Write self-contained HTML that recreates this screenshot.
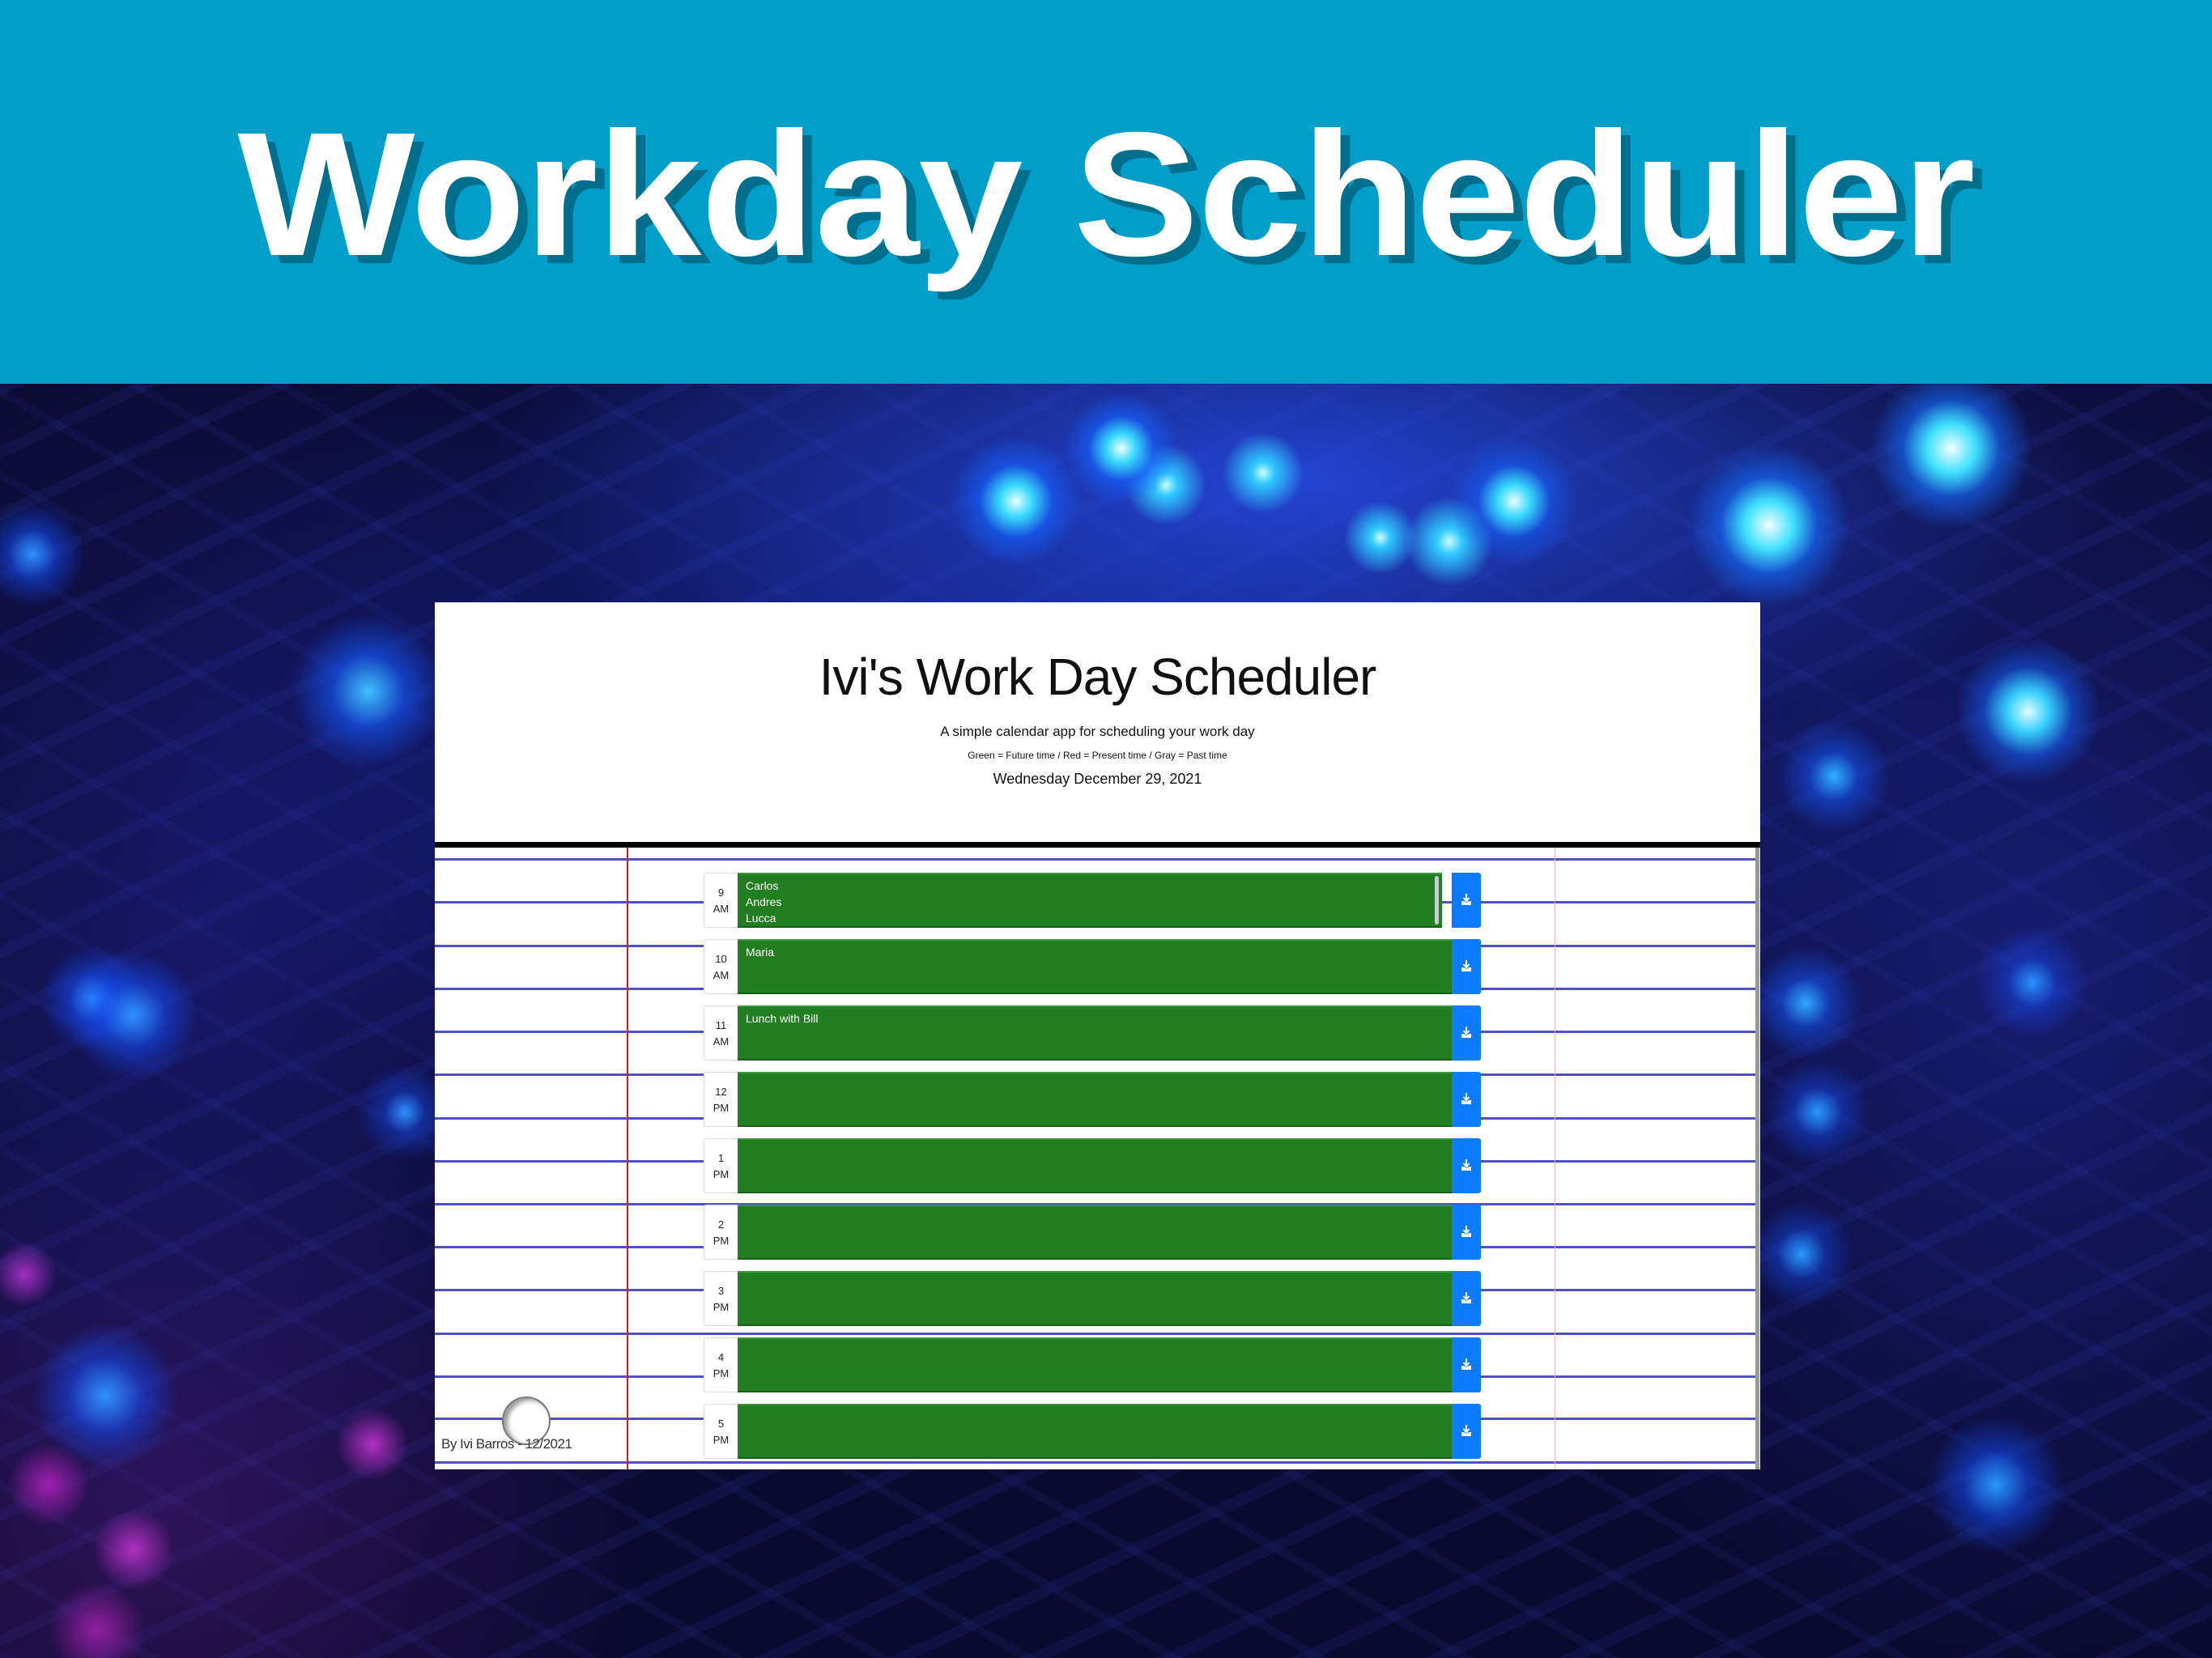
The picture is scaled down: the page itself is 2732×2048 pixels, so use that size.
<!DOCTYPE html>
<html><head><meta charset="utf-8"><style>
*{margin:0;padding:0;box-sizing:border-box}
body{width:2732px;height:2048px;overflow:hidden;position:relative;font-family:"Liberation Sans",sans-serif;background:#080828}
#banner{position:absolute;left:0;top:0;width:2732px;height:474px;background:#009ec8}
#banner h1{position:absolute;left:0;top:4px;width:2732px;text-align:center;font-size:218px;font-weight:bold;color:#fff;line-height:474px;letter-spacing:-1px;text-shadow:11px 10px 0 #006f8e;transform:scaleX(1.065)}
#bg{position:absolute;left:0;top:474px;width:2732px;height:1574px;overflow:hidden;
background:
radial-gradient(circle at 1385px 80px,#e8ffff 0,#38d8ff 18px,rgba(20,100,255,.6) 40px,transparent 70px),
radial-gradient(circle at 1255px 145px,#e8ffff 0,#38d8ff 20px,rgba(20,100,255,.6) 45px,transparent 80px),
radial-gradient(circle at 1440px 125px,#c8ffff 0,#30c8ff 14px,transparent 50px),
radial-gradient(circle at 1560px 110px,#c8ffff 0,#30c8ff 14px,transparent 50px),
radial-gradient(circle at 1870px 145px,#e8ffff 0,#38d8ff 20px,rgba(20,100,255,.5) 45px,transparent 80px),
radial-gradient(circle at 1790px 195px,#c8ffff 0,#30c8ff 16px,transparent 55px),
radial-gradient(circle at 1705px 190px,#c8ffff 0,#30c8ff 12px,transparent 45px),
radial-gradient(circle at 2185px 175px,#f0ffff 0,#40e0ff 30px,rgba(20,110,255,.6) 60px,transparent 100px),
radial-gradient(circle at 2410px 80px,#f0ffff 0,#40e0ff 30px,rgba(20,110,255,.6) 60px,transparent 100px),
radial-gradient(circle at 2505px 405px,#e0ffff 0,#38d0ff 25px,rgba(20,100,255,.5) 55px,transparent 90px),
radial-gradient(circle at 2265px 485px,#30b0ff 0,rgba(20,90,255,.5) 30px,transparent 70px),
radial-gradient(circle at 2230px 765px,#30a8ff 0,rgba(20,90,255,.5) 30px,transparent 70px),
radial-gradient(circle at 2245px 900px,#2898ff 0,rgba(20,80,255,.4) 30px,transparent 65px),
radial-gradient(circle at 2225px 1075px,#2898ff 0,rgba(20,80,255,.4) 30px,transparent 65px),
radial-gradient(circle at 2465px 1360px,#2898ff 0,rgba(20,80,255,.5) 40px,transparent 85px),
radial-gradient(circle at 2510px 740px,#2890ff 0,rgba(20,80,255,.4) 30px,transparent 70px),
radial-gradient(circle at 455px 380px,#40c0ff 0,rgba(20,90,255,.6) 45px,transparent 95px),
radial-gradient(circle at 40px 210px,#3090ff 0,rgba(20,80,255,.5) 30px,transparent 65px),
radial-gradient(circle at 165px 780px,#3090ff 0,rgba(20,80,255,.5) 40px,transparent 80px),
radial-gradient(circle at 115px 760px,#3090ff 0,rgba(20,80,255,.5) 30px,transparent 65px),
radial-gradient(circle at 500px 900px,#3090ff 0,rgba(20,80,255,.4) 25px,transparent 60px),
radial-gradient(circle at 130px 1250px,#3090ff 0,rgba(20,80,255,.5) 45px,transparent 90px),
radial-gradient(circle at 30px 1100px,#a030c0 0,transparent 40px),
radial-gradient(circle at 165px 1440px,#b030c0 0,transparent 50px),
radial-gradient(circle at 460px 1310px,#b030c0 0,transparent 45px),
radial-gradient(circle at 60px 1360px,#a020b0 0,transparent 50px),
radial-gradient(circle at 120px 1540px,#9020a0 0,transparent 60px),
radial-gradient(ellipse 1000px 350px at 1600px 120px,rgba(40,80,240,.8),transparent),
radial-gradient(ellipse 1200px 600px at 1300px 400px,rgba(30,50,200,.55),transparent),
radial-gradient(ellipse 600px 800px at 250px 700px,rgba(40,40,170,.45),transparent),
radial-gradient(ellipse 700px 900px at 2500px 700px,rgba(40,50,190,.45),transparent),
radial-gradient(ellipse 600px 500px at 200px 1400px,rgba(100,30,140,.4),transparent),
repeating-linear-gradient(155deg,rgba(60,80,220,.10) 0 14px,transparent 14px 70px),
repeating-linear-gradient(30deg,rgba(60,80,220,.08) 0 10px,transparent 10px 90px),
#0a0a30}
#panel{position:absolute;left:537px;top:744px;width:1637px;height:1071px;background:#fff;overflow:hidden}
#hdr{position:absolute;left:0;top:0;width:1637px;height:296px;text-align:center;color:#111}
#hdr .t{position:absolute;top:55px;width:100%;font-size:64px;letter-spacing:-1px}
#hdr .s{position:absolute;top:150px;width:100%;font-size:17px}
#hdr .l{position:absolute;top:182px;width:100%;font-size:12px}
#hdr .d{position:absolute;top:208px;width:100%;font-size:18px}
#bar{position:absolute;left:0;top:296px;width:1637px;height:7px;background:#000}
.hl{position:absolute;left:0;width:1632px;height:3px;background:#5050c0}
#red{position:absolute;left:237px;top:303px;width:2px;height:770px;background:#e01818}
#pink{position:absolute;left:1383px;top:303px;width:1px;height:770px;background:#f0b8c0}
#rb{position:absolute;left:1631px;top:303px;width:5px;height:770px;background:#999}
.row{position:absolute;left:332px;width:960px;height:68px}
.lab{position:absolute;left:0;top:0;width:42px;height:68px;background:#fff;border:1px solid #ddd;border-right:none;border-radius:3px 0 0 3px;font-size:13px;text-align:center;line-height:20px;padding-top:14px;color:#222}
.g{position:absolute;left:42px;top:0;width:882px;height:68px;background:#217f22;border-top:2px solid #3a9a3a;border-bottom:2px solid #1a5e1a;color:#fff;font-size:14px;line-height:20px;padding:4px 10px}
.b{position:absolute;left:924px;top:0;width:36px;height:68px;background:#0d7bff;border-radius:0 3px 3px 0}
.b svg{position:absolute;left:12px;top:26px}
#foot{position:absolute;left:8px;top:1030px;font-size:17px;color:#333;letter-spacing:-.5px}
#circ{position:absolute;left:83px;top:981px;width:60px;height:60px;border-radius:50%;background:#fff;border:2px solid #777;box-shadow:inset 5px 3px 6px rgba(0,0,0,.4)}
</style></head><body>
<div id="banner"><h1>Workday Scheduler</h1></div>
<div id="bg"></div>
<div id="panel">
<div id="hdr"><div class="t">Ivi's Work Day Scheduler</div><div class="s">A simple calendar app for scheduling your work day</div><div class="l">Green = Future time / Red = Present time / Gray = Past time</div><div class="d">Wednesday December 29, 2021</div></div>
<div id="bar"></div>
<div class="hl" style="top:316px"></div><div class="hl" style="top:369px"></div><div class="hl" style="top:423px"></div><div class="hl" style="top:476px"></div><div class="hl" style="top:529px"></div><div class="hl" style="top:582px"></div><div class="hl" style="top:636px"></div><div class="hl" style="top:689px"></div><div class="hl" style="top:742px"></div><div class="hl" style="top:795px"></div><div class="hl" style="top:848px"></div><div class="hl" style="top:902px"></div><div class="hl" style="top:955px"></div><div class="hl" style="top:1007px"></div><div class="hl" style="top:1061px"></div>
<div id="red"></div><div id="pink"></div><div id="rb"></div>
<div id="circ"></div>
<div id="foot">By Ivi Barros - 12/2021</div>

<div class="row" style="top:334px"><div class="lab">9<br>AM</div><div class="g" style="width:870px">Carlos<br>Andres<br>Lucca</div><div style="position:absolute;left:903px;top:4px;width:5px;height:60px;background:#ccc;border-radius:3px"></div><div class="b"><svg width="12" height="14" viewBox="0 0 12 14"><path d="M6 0v8M2.5 5l3.5 4 3.5-4" stroke="#fff" stroke-width="2" fill="none"/><path d="M0 9h3l3 2 3-2h3v5H0z" fill="#fff"/></svg></div></div>
<div class="row" style="top:416px"><div class="lab">10<br>AM</div><div class="g">Maria</div><div class="b"><svg width="12" height="14" viewBox="0 0 12 14"><path d="M6 0v8M2.5 5l3.5 4 3.5-4" stroke="#fff" stroke-width="2" fill="none"/><path d="M0 9h3l3 2 3-2h3v5H0z" fill="#fff"/></svg></div></div>
<div class="row" style="top:498px"><div class="lab">11<br>AM</div><div class="g">Lunch with Bill</div><div class="b"><svg width="12" height="14" viewBox="0 0 12 14"><path d="M6 0v8M2.5 5l3.5 4 3.5-4" stroke="#fff" stroke-width="2" fill="none"/><path d="M0 9h3l3 2 3-2h3v5H0z" fill="#fff"/></svg></div></div>
<div class="row" style="top:580px"><div class="lab">12<br>PM</div><div class="g"></div><div class="b"><svg width="12" height="14" viewBox="0 0 12 14"><path d="M6 0v8M2.5 5l3.5 4 3.5-4" stroke="#fff" stroke-width="2" fill="none"/><path d="M0 9h3l3 2 3-2h3v5H0z" fill="#fff"/></svg></div></div>
<div class="row" style="top:662px"><div class="lab">1<br>PM</div><div class="g"></div><div class="b"><svg width="12" height="14" viewBox="0 0 12 14"><path d="M6 0v8M2.5 5l3.5 4 3.5-4" stroke="#fff" stroke-width="2" fill="none"/><path d="M0 9h3l3 2 3-2h3v5H0z" fill="#fff"/></svg></div></div>
<div class="row" style="top:744px"><div class="lab">2<br>PM</div><div class="g"></div><div class="b"><svg width="12" height="14" viewBox="0 0 12 14"><path d="M6 0v8M2.5 5l3.5 4 3.5-4" stroke="#fff" stroke-width="2" fill="none"/><path d="M0 9h3l3 2 3-2h3v5H0z" fill="#fff"/></svg></div></div>
<div class="row" style="top:826px"><div class="lab">3<br>PM</div><div class="g"></div><div class="b"><svg width="12" height="14" viewBox="0 0 12 14"><path d="M6 0v8M2.5 5l3.5 4 3.5-4" stroke="#fff" stroke-width="2" fill="none"/><path d="M0 9h3l3 2 3-2h3v5H0z" fill="#fff"/></svg></div></div>
<div class="row" style="top:908px"><div class="lab">4<br>PM</div><div class="g"></div><div class="b"><svg width="12" height="14" viewBox="0 0 12 14"><path d="M6 0v8M2.5 5l3.5 4 3.5-4" stroke="#fff" stroke-width="2" fill="none"/><path d="M0 9h3l3 2 3-2h3v5H0z" fill="#fff"/></svg></div></div>
<div class="row" style="top:990px"><div class="lab">5<br>PM</div><div class="g"></div><div class="b"><svg width="12" height="14" viewBox="0 0 12 14"><path d="M6 0v8M2.5 5l3.5 4 3.5-4" stroke="#fff" stroke-width="2" fill="none"/><path d="M0 9h3l3 2 3-2h3v5H0z" fill="#fff"/></svg></div></div>
</div>
</body></html>
